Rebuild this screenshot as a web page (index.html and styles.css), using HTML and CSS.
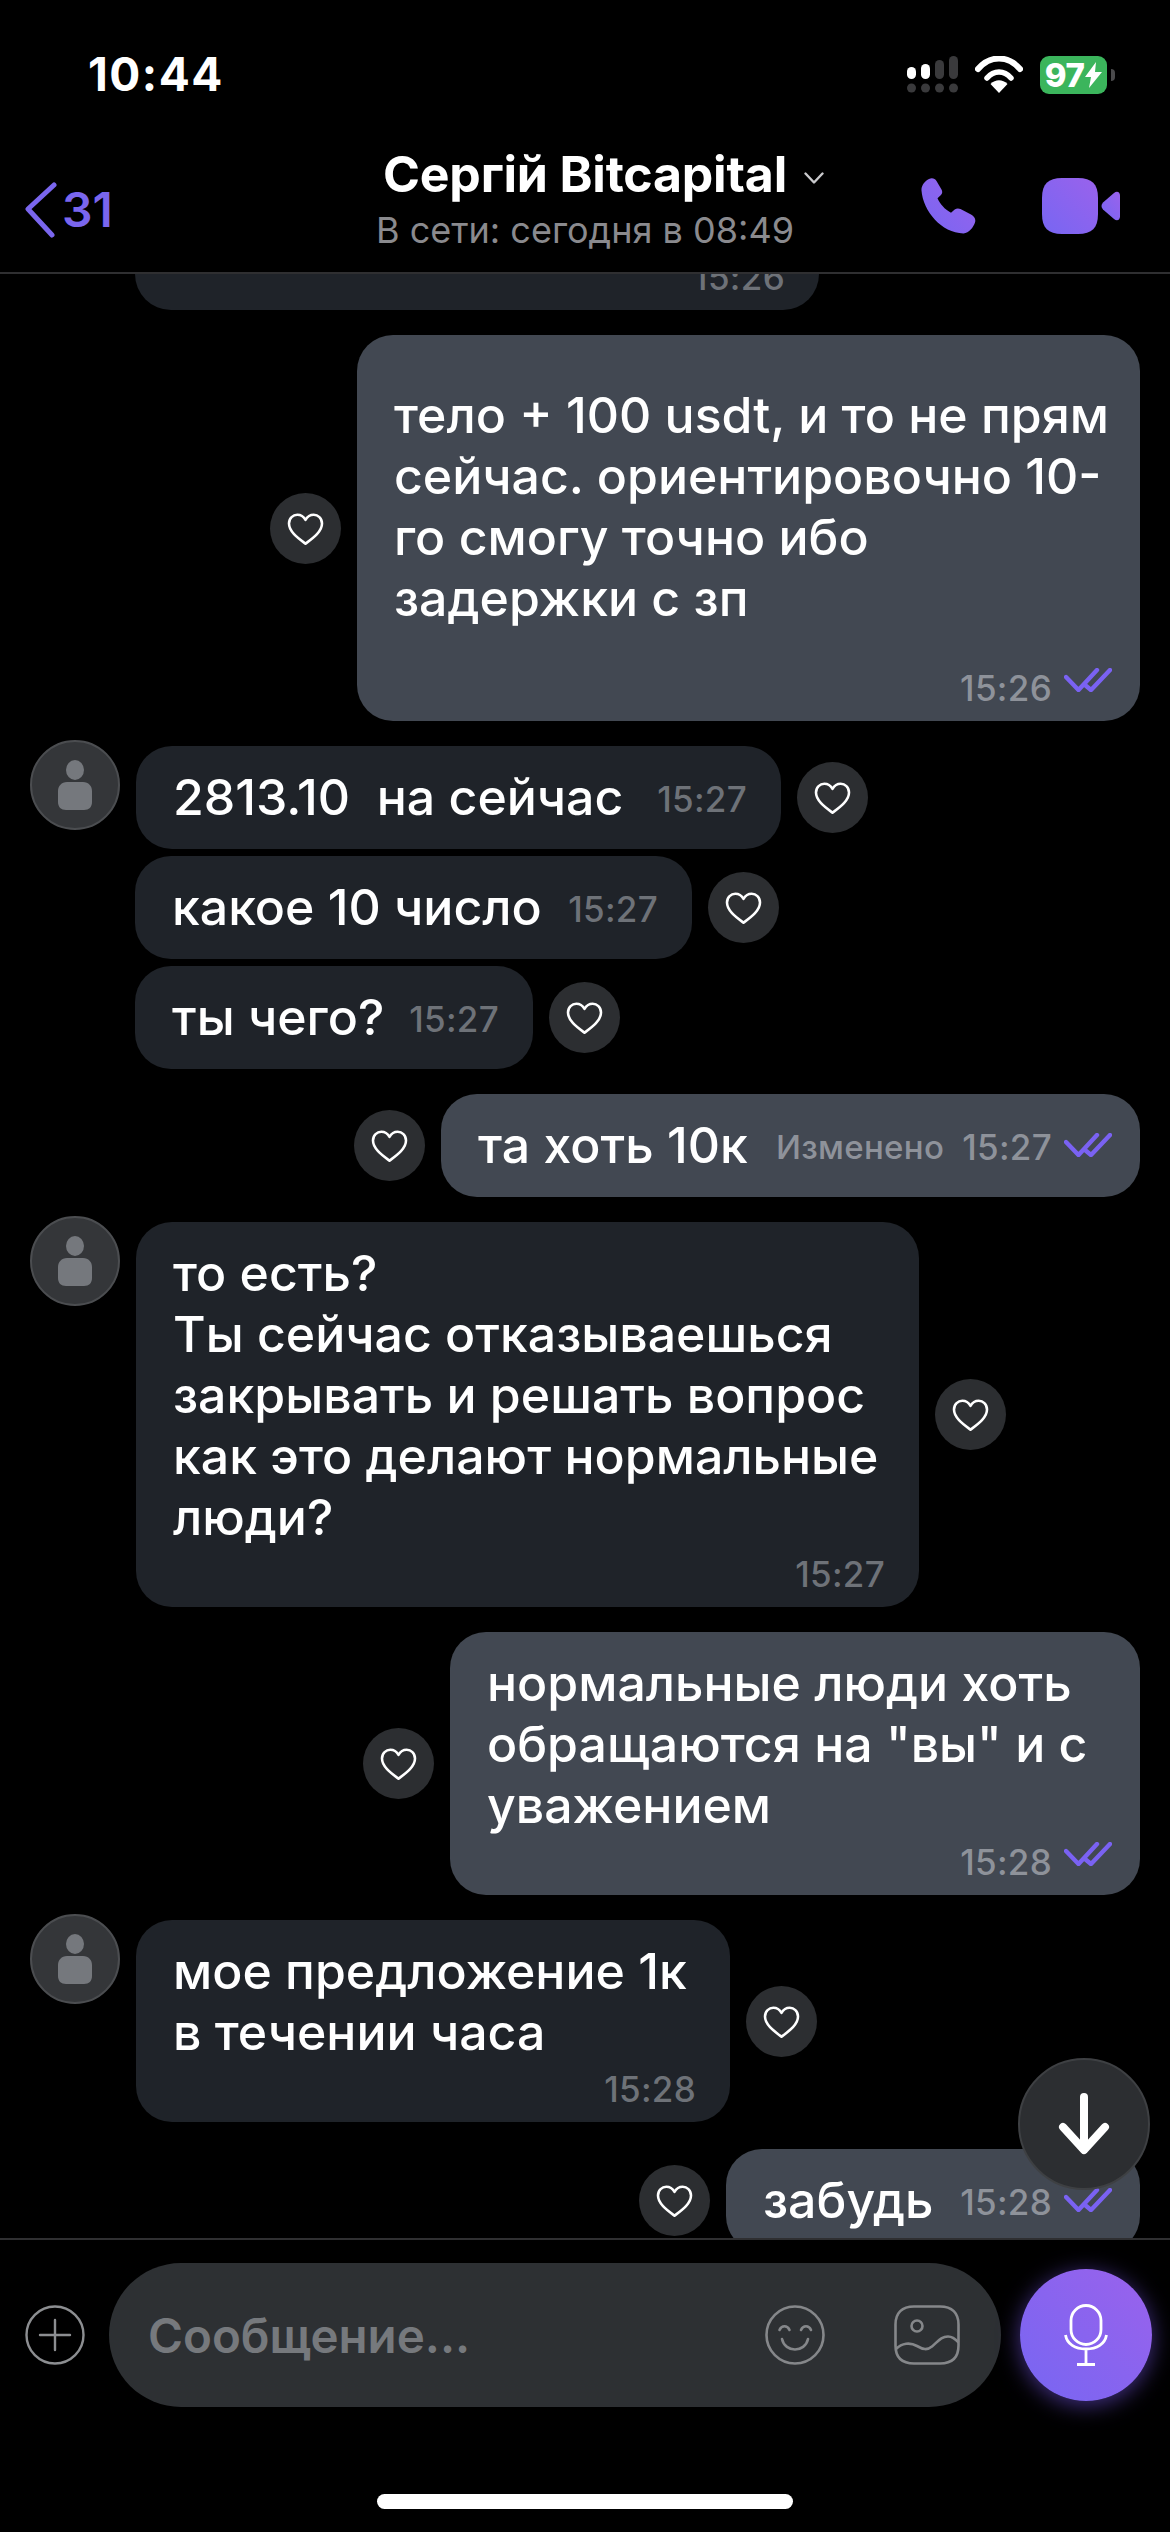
FILE: index.html
```html
<!DOCTYPE html>
<html lang="ru">
<head>
<meta charset="utf-8">
<title>Сергій Bitcapital</title>
<link rel="stylesheet" href="styles.css">
</head>
<body>
<svg class="defs" width="0" height="0" aria-hidden="true">
  <defs>
    <linearGradient id="violet" x1="0" y1="1" x2="1" y2="0">
      <stop offset="0" stop-color="#7766f2"/>
      <stop offset="1" stop-color="#9a62ec"/>
    </linearGradient>
    <symbol id="heart" viewBox="0 0 40 36">
      <path d="M20 33.500C12 27.500 2 20.500 2 11.500 2 5.500 6.500 2 11 2c4 0 7 2 9 5.500C22 4 25 2 29 2c4.500 0 9 3.500 9 9.500 0 9-10 16-18 22z" fill="none" stroke="#fff" stroke-width="2.800" stroke-linejoin="round"/>
    </symbol>
    <symbol id="ticks" viewBox="0 0 48 24">
      <path d="M2 9 14.500 22 33 2M21 17l6 5L46 2" fill="none" stroke="#7a62f2" stroke-width="4.400" stroke-linecap="round" stroke-linejoin="round"/>
    </symbol>
    <symbol id="person" viewBox="0 0 36 50">
      <ellipse cx="18" cy="10" rx="9" ry="10" fill="#75787d"/>
      <path d="M10 22h16c5.500 0 9 4 9 9v11c0 5-3 8-8 8H9c-5 0-8-3-8-8V31c0-5 3.500-9 9-9z" fill="#75787d"/>
    </symbol>
  </defs>
</svg>
<div class="phone">
  <div class="status">
    <span class="clock">10:44</span>
    <div class="status-icons">
      <svg class="signal" width="51" height="37" viewBox="0 0 51 37">
        <rect x="0" y="11" width="9" height="12" rx="4.500" fill="#fff"/>
        <rect x="14" y="8" width="9" height="15" rx="4.500" fill="#fff"/>
        <rect x="28" y="4" width="9" height="19" rx="4.500" fill="#3a3a3c"/>
        <rect x="42" y="0" width="9" height="23" rx="4.500" fill="#3a3a3c"/>
        <circle cx="4.500" cy="32" r="4.500" fill="#3a3a3c"/>
        <circle cx="18.500" cy="32" r="4.500" fill="#3a3a3c"/>
        <circle cx="32.500" cy="32" r="4.500" fill="#3a3a3c"/>
        <circle cx="46.500" cy="32" r="4.500" fill="#3a3a3c"/>
      </svg>
      <svg class="wifi" width="48" height="37" viewBox="0 0 48 37">
        <path d="M3 13C15-1 33-1 45 13" fill="none" stroke="#fff" stroke-width="6" stroke-linecap="round"/>
        <path d="M12 22c7-8 17-8 24 0" fill="none" stroke="#fff" stroke-width="5.500" stroke-linecap="round"/>
        <path d="M15.500 28c5-5 12-5 17 0L24 37z" fill="#fff"/>
      </svg>
      <div class="battery">
        <span class="battery-level">97</span>
        <svg class="bolt" width="17" height="26" viewBox="0 0 17 26"><path d="M11 0 0 15h6L4 26 17 10h-7z" fill="#fff"/></svg>
      </div>
      <span class="battery-nub"></span>
    </div>
  </div>

  <header class="nav">
    <div class="back">
      <svg class="back-chevron" width="32" height="56" viewBox="0 0 32 56"><path d="M29 3 3 27l24 26" fill="none" stroke="#7a66ee" stroke-width="5" stroke-linecap="round" stroke-linejoin="round"/></svg>
      <span class="back-count">31</span>
    </div>
    <div class="peer">
      <div class="peer-name">
        <span>Сергій Bitcapital</span>
        <svg class="peer-chevron" width="20" height="12" viewBox="0 0 20 12"><path d="M1.500 1.500 10 10.500l8.500-9" fill="none" stroke="#c9c9cc" stroke-width="2.400" stroke-linecap="round" stroke-linejoin="round"/></svg>
      </div>
      <div class="peer-seen">В сети: сегодня в 08:49</div>
    </div>
    <div class="actions">
      <svg width="56" height="56" viewBox="0 0 56 56"><path d="M8 1c3-1.500 6-.5 7.500 2l5 8.500c1.200 2.200.8 4.300-.8 5.800l-3.200 3c2.700 5.800 7 11 13.500 14.500l3.700-3.200c1.800-1.300 3.800-1.400 5.800-.5l10.500 5.500c3.500 2 5 4.500 4 8-1.500 4.500-6 10.800-11.500 10.800C20.500 55 2 33 .5 12.500.1 7.500 4 3 8 1z" fill="url(#violet)"/></svg>
      <svg class="video" width="78" height="56" viewBox="0 0 78 56">
        <path d="M20 0h16c14 0 20 6 20 20v16c0 14-6 20-20 20H20C6 56 0 50 0 36V20C0 6 6 0 20 0z" fill="url(#violet)"/>
        <path d="M61 24.500 72 15c3-2.500 6-1 6 2.500v21c0 3.500-3 5-6 2.500L61 31.500c-2-2-2-5 0-7z" fill="url(#violet)"/>
      </svg>
    </div>
  </header>

  <main class="messages">
    <div class="row in row-clipped">
      <div class="bubble incoming w-684 clipped">
        <div class="meta"><time>15:26</time></div>
      </div>
    </div>

    <div class="row out">
      <button class="react"><svg width="39" height="33"><use href="#heart"/></svg></button>
      <div class="bubble outgoing w-783 tall">
        <p>тело + 100 usdt, и то не прям<br>сейчас. ориентировочно 10-<br>го смогу точно ибо<br>задержки с зп</p>
        <div class="meta"><time>15:26</time><svg class="tick" width="48" height="24"><use href="#ticks"/></svg></div>
      </div>
    </div>

    <div class="row in">
      <div class="avatar"><svg width="36" height="50"><use href="#person"/></svg></div>
      <div class="bubble incoming inline w-645">
        <p>2813.10&nbsp; на сейчас</p>
        <time>15:27</time>
      </div>
      <button class="react"><svg width="39" height="33"><use href="#heart"/></svg></button>
    </div>
    <div class="row in follow">
      <div class="bubble incoming inline w-557">
        <p>какое 10 число</p>
        <time>15:27</time>
      </div>
      <button class="react"><svg width="39" height="33"><use href="#heart"/></svg></button>
    </div>
    <div class="row in follow">
      <div class="bubble incoming inline w-398">
        <p>ты чего?</p>
        <time>15:27</time>
      </div>
      <button class="react"><svg width="39" height="33"><use href="#heart"/></svg></button>
    </div>

    <div class="row out">
      <button class="react"><svg width="39" height="33"><use href="#heart"/></svg></button>
      <div class="bubble outgoing inline w-699">
        <p>та хоть 10к</p>
        <span class="edited">Изменено</span>
        <time>15:27</time>
        <svg class="tick" width="48" height="24"><use href="#ticks"/></svg>
      </div>
    </div>

    <div class="row in">
      <div class="avatar"><svg width="36" height="50"><use href="#person"/></svg></div>
      <div class="bubble incoming w-783">
        <p>то есть?<br>Ты сейчас отказываешься<br>закрывать и решать вопрос<br>как это делают нормальные<br>люди?</p>
        <div class="meta"><time>15:27</time></div>
      </div>
      <button class="react"><svg width="39" height="33"><use href="#heart"/></svg></button>
    </div>

    <div class="row out">
      <button class="react"><svg width="39" height="33"><use href="#heart"/></svg></button>
      <div class="bubble outgoing w-690">
        <p>нормальные люди хоть<br>обращаются на "вы" и с<br>уважением</p>
        <div class="meta"><time>15:28</time><svg class="tick" width="48" height="24"><use href="#ticks"/></svg></div>
      </div>
    </div>

    <div class="row in">
      <div class="avatar"><svg width="36" height="50"><use href="#person"/></svg></div>
      <div class="bubble incoming w-594">
        <p>мое предложение 1к<br>в течении часа</p>
        <div class="meta"><time>15:28</time></div>
      </div>
      <button class="react"><svg width="39" height="33"><use href="#heart"/></svg></button>
    </div>

    <div class="row out row-last">
      <button class="react"><svg width="39" height="33"><use href="#heart"/></svg></button>
      <div class="bubble outgoing inline w-414">
        <p>забудь</p>
        <time>15:28</time>
        <svg class="tick" width="48" height="24"><use href="#ticks"/></svg>
      </div>
    </div>

    <button class="scroll-down">
      <svg width="52" height="62" viewBox="0 0 52 62"><path d="M26 4v52M5 34l21 23 21-23" fill="none" stroke="#fff" stroke-width="8" stroke-linecap="round" stroke-linejoin="round"/></svg>
    </button>
  </main>

  <footer class="composer-area">
    <div class="composer">
      <svg class="plus" width="60" height="60" viewBox="0 0 60 60">
        <circle cx="30" cy="30" r="28.500" fill="none" stroke="#8c8e91" stroke-width="2.400"/>
        <path d="M30 15v30M15 30h30" fill="none" stroke="#8c8e91" stroke-width="2.400" stroke-linecap="round"/>
      </svg>
      <div class="field">
        <span class="placeholder">Сообщение...</span>
        <svg class="smile" width="60" height="60" viewBox="0 0 60 60">
          <circle cx="30" cy="30" r="28.500" fill="none" stroke="#85878a" stroke-width="2.600"/>
          <path d="M14.500 25c2-5 8-5 10 0M36 25c2-5 8-5 10 0M17 34c3 14 23 14 26 0" fill="none" stroke="#85878a" stroke-width="2.600" stroke-linecap="round"/>
        </svg>
        <svg class="picture" width="66" height="60" viewBox="0 0 66 60">
          <path d="M20 1.500h26c12 0 18.500 6.500 18.500 18v21c0 12-6.500 18-18.500 18H20C8 58.500 1.500 52.500 1.500 40.500v-21C1.500 8 8 1.500 20 1.500z" fill="none" stroke="#85878a" stroke-width="2.600"/>
          <circle cx="23" cy="21" r="5.500" fill="none" stroke="#85878a" stroke-width="2.600"/>
          <path d="M2 44c6-6 14-7 21-3 6 3.500 10 4.500 15 .5 6-5 9-10 16-10 4 0 7 2 10.500 6" fill="none" stroke="#85878a" stroke-width="2.600"/>
        </svg>
      </div>
      <button class="mic">
        <svg width="44" height="62" viewBox="0 0 44 62">
          <rect x="7" y="1.500" width="30" height="39" rx="15" fill="none" stroke="#fff" stroke-width="2.800"/>
          <path d="M1.500 31C3 40 11 45 22 45s19-5 20.500-14M22 45v15M13 60.500h18" fill="none" stroke="#fff" stroke-width="2.800"/>
        </svg>
      </button>
    </div>
    <div class="home-indicator"></div>
  </footer>
</div>
</body>
</html>
```

FILE: styles.css
```css
* { box-sizing: border-box; }

html, body {
  margin: 0;
  padding: 0;
  background: #000;
}

body {
  font-family: Inter, "Noto Sans", "Liberation Sans", sans-serif;
  color: #fff;
}

.defs { display: block; height: 0; }

button {
  border: 0;
  padding: 0;
  background: none;
  font: inherit;
  color: inherit;
}

.phone {
  width: 1170px;
  height: 2532px;
  display: flex;
  flex-direction: column;
  overflow: hidden;
  background: #000;
}

/* status bar */
.status {
  flex: none;
  height: 120px;
  padding: 54px 55px 0 88px;
  display: flex;
  justify-content: space-between;
  align-items: flex-start;
}

.clock {
  font-size: 46px;
  font-weight: 700;
  line-height: 40px;
  letter-spacing: 1.5px;
}

.status-icons {
  display: flex;
  align-items: flex-start;
  padding-top: 2px;
}

.signal { margin-right: 17px; }
.wifi { margin-right: 17px; }

.battery {
  width: 67px;
  height: 38px;
  border-radius: 9px;
  background: #3bb55c;
  display: flex;
  align-items: center;
  justify-content: center;
  gap: 1px;
}

.battery-level {
  font-size: 33px;
  font-weight: 800;
  line-height: 38px;
  letter-spacing: -0.5px;
}

.battery-nub {
  width: 4px;
  height: 12px;
  margin: 13px 0 0 4px;
  border-radius: 0 6px 6px 0;
  background: #4a4a4c;
}

/* nav bar */
.nav {
  flex: none;
  height: 154px;
  padding: 0 25px;
  display: grid;
  grid-template-columns: 1fr auto 1fr;
  align-items: start;
  border-bottom: 2px solid #2f2f31;
}

.back {
  display: flex;
  align-items: center;
  gap: 5px;
  padding-top: 62px;
  color: #7a66ee;
}

.back-count {
  font-size: 48px;
  font-weight: 600;
  line-height: 56px;
}

.peer {
  padding-top: 27px;
  text-align: center;
}

.peer-name {
  display: flex;
  justify-content: center;
  align-items: center;
  gap: 17px;
  font-size: 50px;
  font-weight: 700;
  line-height: 54px;
  letter-spacing: -0.2px;
}

.peer-chevron {
  margin-right: -37px;
  margin-top: 8px;
}

.peer-seen {
  margin-top: 7px;
  font-size: 36px;
  line-height: 44px;
  color: #8a8a8e;
}

.actions {
  display: flex;
  justify-content: flex-end;
  align-items: center;
  gap: 65px;
  padding: 58px 25px 0 0;
}

/* messages */
.messages {
  position: relative;
  flex: 1;
  min-height: 0;
  overflow: hidden;
  display: flex;
  flex-direction: column;
  gap: 25px;
}

.row {
  flex: none;
  display: flex;
  align-items: center;
  gap: 16px;
}

.row.in { padding-left: 135px; }
.row.out { justify-content: flex-end; padding-right: 30px; }
.row.follow { margin-top: -18px; }
.row.in:has(.avatar) { padding-left: 30px; }
.row-clipped { margin-top: -67px; }
.row-last { margin-top: 2px; }

.avatar {
  flex: none;
  align-self: flex-start;
  width: 90px;
  height: 90px;
  margin-top: -6px;
  border-radius: 50%;
  background: #343639;
  border: 2px solid #4b4d50;
  display: flex;
  align-items: center;
  justify-content: center;
}

.bubble {
  flex: none;
  border-radius: 36px;
  padding: 21px 34px 0 37px;
}

.bubble p {
  margin: 0;
  font-size: 50px;
  font-weight: 500;
  line-height: 61px;
  white-space: nowrap;
}

.incoming { background: #1f2329; }
.outgoing { background: #424852; }

.clipped { height: 103px; padding-top: 0; display: flex; flex-direction: column; justify-content: flex-end; }

.tall { padding-top: 50px; }
.tall .meta { margin-top: 33px; }

.inline {
  height: 103px;
  padding-top: 0;
  display: flex;
  align-items: center;
}

.inline p { margin-right: auto; }

time, .edited {
  font-size: 35px;
  font-weight: 500;
  line-height: 40px;
  letter-spacing: 0.3px;
  white-space: nowrap;
}

.incoming time { color: #6e7278; }
.outgoing time, .edited { color: #8e929a; }

.inline time { margin-top: 3px; }

.edited {
  margin-right: 18px;
  font-size: 33px;
  margin-top: 3px;
}

.tick {
  flex: none;
  margin-left: 12px;
  margin-right: -6px;
}

.inline .tick { margin-top: -2px; }

.meta {
  height: 59px;
  display: flex;
  justify-content: flex-end;
  align-items: flex-start;
  padding-top: 6px;
}

.w-684 { width: 684px; }
.w-783 { width: 783px; }
.w-645 { width: 645px; }
.w-557 { width: 557px; }
.w-398 { width: 398px; }
.w-699 { width: 699px; }
.w-690 { width: 690px; }
.w-594 { width: 594px; }
.w-414 { width: 414px; }

.react {
  flex: none;
  width: 71px;
  height: 71px;
  border-radius: 50%;
  background: #2c2e31;
  display: flex;
  align-items: center;
  justify-content: center;
}

.react svg { margin-top: 2px; }

.scroll-down {
  position: absolute;
  left: 1018px;
  top: 1784px;
  width: 132px;
  height: 132px;
  border-radius: 50%;
  background: #2c2e31;
  border: 2px solid #3e4043;
  display: flex;
  align-items: center;
  justify-content: center;
}

/* composer */
.composer-area {
  flex: none;
  height: 294px;
  border-top: 2px solid #2f2f31;
  padding-top: 23px;
  display: flex;
  flex-direction: column;
}

.composer {
  display: flex;
  align-items: center;
  padding: 0 18px 0 25px;
}

.plus {
  flex: none;
  margin-right: 24px;
}

.field {
  flex: none;
  width: 892px;
  height: 144px;
  border-radius: 72px;
  background: #2d3033;
  display: flex;
  align-items: center;
  padding: 0 41px 0 39px;
}

.placeholder {
  flex: 1;
  font-size: 47.500px;
  font-weight: 600;
  color: #76797d;
}

.smile { margin-right: 69px; }

.mic {
  flex: none;
  width: 132px;
  height: 132px;
  margin-left: 19px;
  border-radius: 50%;
  background: linear-gradient(45deg, #7766f2, #9a62ec);
  box-shadow: 0 4px 22px rgba(122, 90, 240, 0.55);
  display: flex;
  align-items: center;
  justify-content: center;
}

.home-indicator {
  width: 416px;
  height: 15px;
  margin: 87px auto 0;
  border-radius: 8px;
  background: #fff;
}
```
